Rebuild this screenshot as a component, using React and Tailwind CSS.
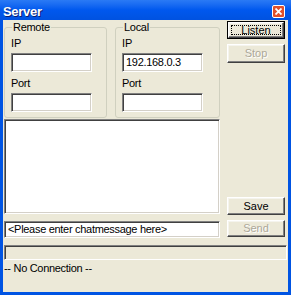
import React from "react";

const font = { fontFamily: '"Liberation Sans", Arial, sans-serif' };

const Sunken = ({ children, className = "" }) => (
  <div
    className={`bg-white border border-t-[#808080] border-l-[#808080] border-b-white border-r-white shadow-[inset_1px_1px_0_#404040,inset_-1px_-1px_0_#d4d0c8] text-[11px] leading-[13px] tracking-[-0.3px] text-black px-[3px] flex items-center ${className}`}
  >
    {children}
  </div>
);

const Button = ({ label, disabled, isDefault, className = "" }) => (
  <div
    className={`w-[58px] flex items-center justify-center text-[11px] leading-[13px] ${
      isDefault ? "border border-black" : ""
    } ${className}`}
  >
    <div
      className={`w-full h-full bg-[#ece9d8] border border-t-white border-l-white border-b-[#404040] border-r-[#404040] shadow-[inset_-1px_-1px_0_#808080,inset_1px_1px_0_#f5f4ee] flex items-center justify-center ${
        isDefault ? "p-[2px]" : ""
      }`}
    >
      {isDefault ? (
        <span className="flex-1 self-stretch border border-dotted border-black flex items-center justify-center">
          {label}
        </span>
      ) : (
        <span
          className={
            disabled
              ? "text-[#aca899] [text-shadow:1px_1px_0_#ffffff]"
              : "text-black"
          }
        >
          {label}
        </span>
      )}
    </div>
  </div>
);

const Group = ({ title, ip, className = "" }) => (
  <fieldset
    className={`mt-[1px] h-[97px] border border-[#d0d0bf] rounded-[3px] px-[6px] ${className}`}
  >
    <legend className="ml-[1px] px-[1px] text-[11px] leading-[13px] tracking-[-0.3px] text-black">
      {title}
    </legend>
    <div className="mt-[3px] text-[11px] leading-[13px] text-black">IP</div>
    <Sunken className="mt-[3px] h-[19px] w-[81px]">{ip}</Sunken>
    <div className="mt-[5px] text-[11px] leading-[13px] tracking-[-0.3px] text-black">Port</div>
    <Sunken className="mt-[3px] h-[19px] w-[81px]" />
  </fieldset>
);

export default function App() {
  return (
    <div className="w-[291px] h-[295px] flex flex-col bg-[#0054e3]" style={font}>
      {/* title bar */}
      <div className="h-[20px] flex items-center justify-between pl-[3px] pr-[6px] bg-linear-to-b from-[#2a7af5] via-[#0058ee] to-[#0052e0]">
        <span className="text-white font-bold text-[13px] tracking-[-0.3px] [text-shadow:1px_1px_0_#0a1e6e] mt-[3px]">
          Server
        </span>
        <div className="mt-[3px] w-[13px] h-[13px] rounded-[2px] border border-white bg-[#e0502c] flex items-center justify-center">
          <svg width="7" height="7" viewBox="0 0 7 7">
            <path d="M0.5 0.5 L6.5 6.5 M6.5 0.5 L0.5 6.5" stroke="white" strokeWidth="1.8" />
          </svg>
        </div>
      </div>

      {/* client area */}
      <div className="flex-1 ml-[3px] mr-[3px] mb-[3px] bg-[#ece9d8] flex flex-col">
        <div className="flex">
          <Group title="Remote" ip="" className="ml-[1px] w-[103px]" />
          <Group title="Local" ip="192.168.0.3" className="ml-[8px] w-[105px]" />
          <div className="ml-[7px] flex flex-col">
            <Button label="Listen" isDefault className="mt-[1px] h-[18px]" />
            <Button label="Stop" disabled className="mt-[5px] h-[19px]" />
          </div>
        </div>

        <div className="flex items-end mt-[1px]">
          <Sunken className="ml-[1px] w-[216px] h-[95px]" />
          <Button label="Save" className="ml-[7px] h-[18px] mb-[-1px]" />
        </div>

        <div className="flex items-start mt-[7px]">
          <Sunken className="ml-[1px] w-[216px] h-[17px]">
            &lt;Please enter chatmessage here&gt;
          </Sunken>
          <Button label="Send" disabled className="ml-[7px] h-[17px] mt-[-1px]" />
        </div>

        <div className="mt-[7px] ml-[1px] mr-[1px] h-[15px] border border-t-[#808080] border-l-[#808080] border-b-white border-r-white shadow-[inset_1px_1px_0_#404040]" />
        <div className="mt-[2px] ml-[1px] text-[11px] leading-[13px] tracking-[-0.3px] text-black">
          -- No Connection --
        </div>
      </div>
    </div>
  );
}
